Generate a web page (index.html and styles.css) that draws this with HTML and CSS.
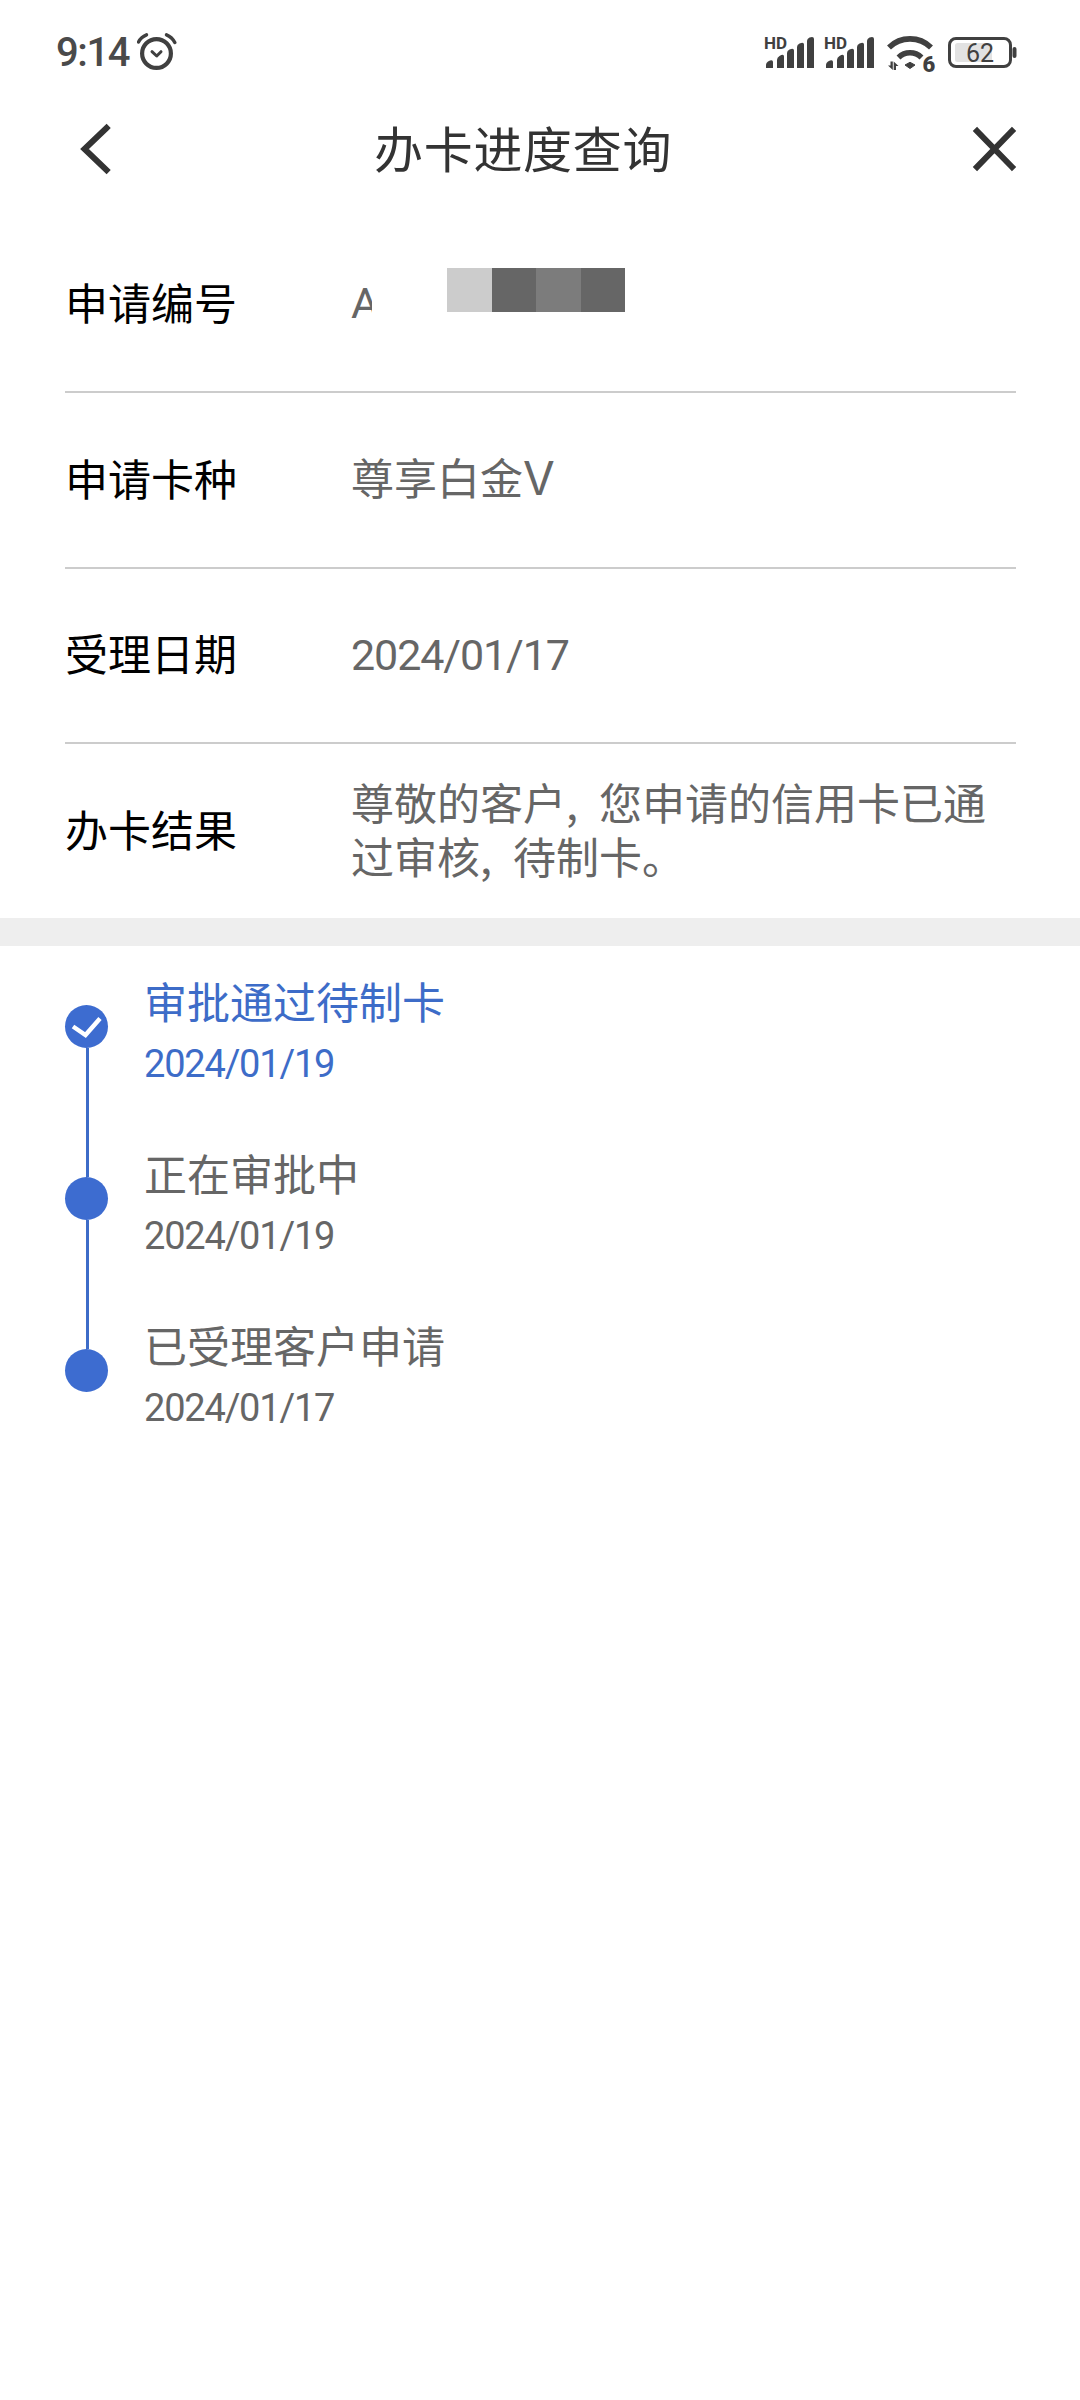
FILE: index.html
```html
<!DOCTYPE html>
<html lang="zh-CN">
<head>
<meta charset="utf-8">
<title>办卡进度查询</title>
<link rel="stylesheet" href="styles.css">
</head>
<body>
<div class="page">
  <div class="status">
    <span class="time">9:14</span>
    <svg class="ic-alarm" width="40" height="38" viewBox="0 0 40 38" fill="none" stroke="#404040">
      <circle cx="19.5" cy="20.5" r="14.4" stroke-width="4.2"/>
      <path d="M15 18.7L19.7 23L24 18.7" stroke-width="3" stroke-linecap="round" stroke-linejoin="round"/>
      <path d="M1.5 9Q4 4 9.5 1.8M29.5 1.8Q35 4 37.8 9.5" stroke-width="3.4" stroke-linecap="round"/>
    </svg>
    <div class="status-right">
      <svg class="sig" width="50" height="33" viewBox="0 0 50 33">
        <text class="hd" x="0" y="12.5">HD</text>
        <path fill="#404040" d="M2 32V29Q2 26.5 4 25.5L6 24.5Q9 23.5 9 26V32ZM13 32V24Q13 21.5 15.5 20Q20 17.5 20 20.5V32ZM23 32V17Q23 14.5 25.5 13.5Q30 11.5 30 14.5V32ZM33 32V11Q33 8.5 35.5 7.5Q40 5.5 40 8.5V32ZM43 32V5Q43 2.5 45.5 1.5Q50 0 50 3V32Z"/>
      </svg>
      <svg class="sig" width="50" height="33" viewBox="0 0 50 33">
        <text class="hd" x="0" y="12.5">HD</text>
        <path fill="#404040" d="M2 32V29Q2 26.5 4 25.5L6 24.5Q9 23.5 9 26V32ZM13 32V24Q13 21.5 15.5 20Q20 17.5 20 20.5V32ZM23 32V17Q23 14.5 25.5 13.5Q30 11.5 30 14.5V32ZM33 32V11Q33 8.5 35.5 7.5Q40 5.5 40 8.5V32ZM43 32V5Q43 2.5 45.5 1.5Q50 0 50 3V32Z"/>
      </svg>
      <svg class="wifi" width="48" height="38" viewBox="0 0 48 38">
        <path d="M2 12.5A30 30 0 0 1 44 12.5M11.5 22.4A16.5 16.5 0 0 1 34.5 22.4" fill="none" stroke="#404040" stroke-width="5.6"/>
        <path d="M18 30L23 27.3L28 30L23 33.5Z" fill="#404040" stroke="#404040" stroke-linejoin="round"/>
        <path d="M3.5 26.5H5.8V35L1 30.5H3.5ZM6.7 35V26.5L11.5 31H9V35Z" fill="#404040"/>
        <text class="six" x="35.5" y="37">6</text>
      </svg>
      <svg class="batt" width="70" height="32" viewBox="0 0 70 32">
        <rect x="1.5" y="1.5" width="61" height="28" rx="6.5" fill="#fff" stroke="#404040" stroke-width="3"/>
        <rect x="7" y="6" width="37" height="19" rx="2.5" fill="#e2e2e2"/>
        <rect x="64.5" y="10" width="4" height="11" rx="2" fill="#404040"/>
        <text class="pct" x="32" y="25" text-anchor="middle">62</text>
      </svg>
    </div>
  </div>

  <header class="nav">
    <svg class="back" width="40" height="60" viewBox="0 0 40 60" fill="none" stroke="#333" stroke-width="6" stroke-linecap="square">
      <path d="M31.5 9L9.5 30L31.5 51"/>
    </svg>
    <h1 class="title">办卡进度查询</h1>
    <svg class="close" width="52" height="52" viewBox="0 0 52 52" fill="none" stroke="#333" stroke-width="6" stroke-linecap="square">
      <path d="M8 8L43 44M43 8L8 44"/>
    </svg>
  </header>

  <section class="info">
    <div class="row">
      <div class="label">申请编号</div>
      <div class="value masked">
        <span class="cut">A</span>
        <div class="blur"><i class="b1"></i><i class="b2"></i><i class="b3"></i><i class="b2"></i></div>
      </div>
    </div>
    <div class="row">
      <div class="label">申请卡种</div>
      <div class="value">尊享白金<span class="latin">V</span></div>
    </div>
    <div class="row">
      <div class="label">受理日期</div>
      <div class="value num">2024/01/17</div>
    </div>
    <div class="row last">
      <div class="label">办卡结果</div>
      <div class="value multi">尊敬的客户<span class="cm">,</span>您申请的信用卡已通过审核<span class="cm">,</span>待制卡。</div>
    </div>
  </section>

  <div class="band"></div>

  <section class="steps">
    <div class="step active">
      <div class="rail">
        <span class="dot"><svg width="43" height="43" viewBox="0 0 43 43" fill="none" stroke="#fff" stroke-width="4.4"><path d="M8 21.5L20.5 30L35 13.5"/></svg></span>
        <span class="line"></span>
      </div>
      <div class="body">
        <div class="st-title">审批通过待制卡</div>
        <div class="st-date">2024/01/19</div>
      </div>
    </div>
    <div class="step">
      <div class="rail"><span class="dot"></span><span class="line"></span></div>
      <div class="body">
        <div class="st-title">正在审批中</div>
        <div class="st-date">2024/01/19</div>
      </div>
    </div>
    <div class="step">
      <div class="rail"><span class="dot"></span></div>
      <div class="body">
        <div class="st-title">已受理客户申请</div>
        <div class="st-date">2024/01/17</div>
      </div>
    </div>
  </section>
</div>
</body>
</html>
```
FILE: styles.css
```css
* { box-sizing: border-box; }
html, body { margin: 0; padding: 0; background: #fff; }
body { font-family: "Noto Sans CJK SC", Roboto, sans-serif; }
.page { width: 1080px; height: 2400px; overflow: hidden; background: #fff; }

.status { height: 84px; padding: 22px 62px 0 56px; display: flex; align-items: flex-start; }
.time { font-family: Roboto, sans-serif; font-size: 40px; font-weight: 500; line-height: 62px; color: #4a4a4a; letter-spacing: -1.4px; }
.ic-alarm { margin: 11px 0 0 8px; }
.status-right { margin-left: auto; display: flex; align-items: flex-start; }
.sig { margin-top: 14px; margin-right: 10px; overflow: visible; }
.wifi { overflow: visible; }
.sig + .wifi { margin: 13px 0 0 3px; }
.batt { margin: 15px 0 0 13px; }
.hd { font-family: Roboto, sans-serif; font-size: 17px; font-weight: 700; fill: #404040; }
.six { font-family: Roboto, sans-serif; font-size: 22px; font-weight: 900; fill: #404040; }
.pct { font-family: Roboto, sans-serif; font-size: 25px; fill: #404040; }

.nav { height: 130px; display: flex; align-items: center; padding: 0 59px 0 75px; }
.title { margin: 0 0 5px 259px; font-size: 49px; font-weight: 400; color: #333; letter-spacing: 0.7px; line-height: 60px; }
.close { margin-left: auto; }

.info { margin: 3.5px 64px 0 65px; }
.row { height: 175.5px; display: flex; align-items: center; border-bottom: 2px solid #ccc; }
.row.last { border-bottom: 0; height: 174px; }
.label { width: 286px; flex: none; font-size: 43px; line-height: 54px; color: #000; padding-bottom: 6px; }
.value { font-size: 43px; line-height: 54.5px; color: #666; padding-bottom: 6px; }
.num { font-family: Roboto, sans-serif; letter-spacing: -1.1px; padding-bottom: 0; }
.multi { flex: 1; }
.latin { font-family: Inter, sans-serif; font-size: 46px; font-weight: 400; }
.cm { margin-right: 21px; }
.masked { position: relative; height: 54px; padding-bottom: 0; margin-bottom: 3px; }
.cut { display: block; width: 21px; overflow: hidden; font-family: Roboto, sans-serif; }
.blur { position: absolute; left: 96px; top: -8px; display: flex; height: 44px; }
.blur i { display: block; width: 44.5px; }
.b1 { background: #ccc; }
.b2 { background: #666; }
.b3 { background: #7c7c7c; }

.band { height: 28px; background: #eee; }

.steps { padding: 28px 0 0 65px; }
.step { height: 172px; display: flex; color: #666; }
.step.active { color: #3d6cc8; }
.rail { width: 43px; flex: none; display: flex; flex-direction: column; align-items: center; padding-top: 31px; }
.dot { width: 43px; height: 43px; flex: none; border-radius: 50%; background: #3d6cd0; }
.dot svg { display: block; }
.line { width: 3px; flex: 1; margin-left: 2px; margin-bottom: -31px; background: #3d6cc8; }
.body { margin-left: 36px; }
.st-title { font-size: 43px; line-height: 52px; }
.st-date { margin-top: 15px; font-family: Roboto, sans-serif; font-size: 38px; line-height: 46px; letter-spacing: -1.2px; }
```
